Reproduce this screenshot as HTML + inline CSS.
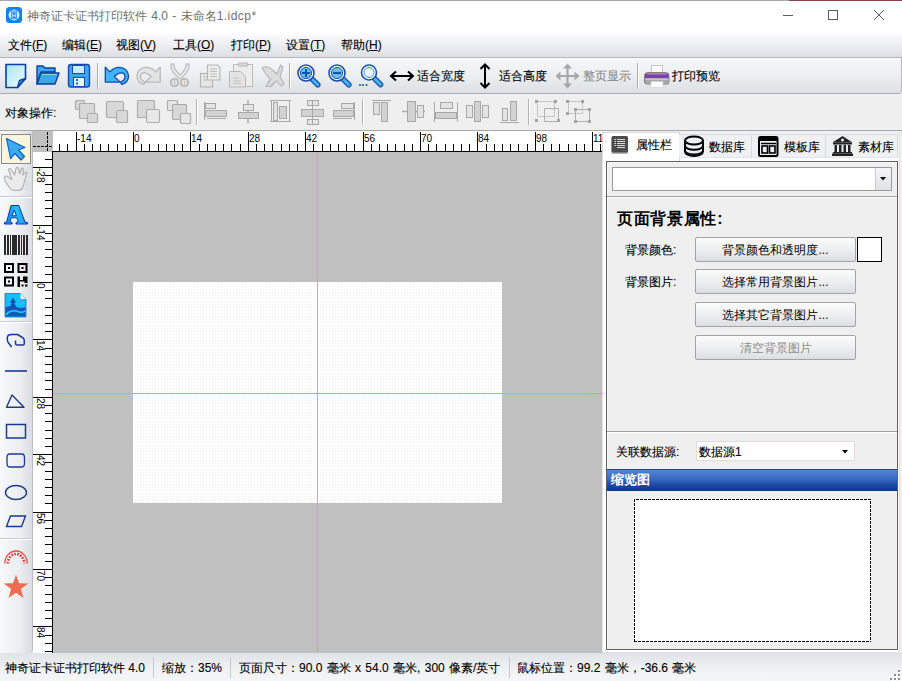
<!DOCTYPE html>
<html><head><meta charset="utf-8">
<style>
*{box-sizing:border-box}
html,body{margin:0;padding:0}
body{width:902px;height:681px;overflow:hidden;position:relative;background:#f0f0f0;font-family:"Liberation Sans",sans-serif;font-size:12px;color:#000}
.a{position:absolute}
.t{position:absolute;white-space:nowrap;line-height:14px;-webkit-text-stroke:0.12px currentColor}
svg{position:absolute;overflow:visible}
.btn{position:absolute;left:695px;width:161px;height:25px;border:1px solid #a3a3a3;border-radius:2px;background:linear-gradient(#fbfbfb,#eeeff0 50%,#dcdee0);text-align:center;line-height:24px;white-space:nowrap}
u{text-decoration:underline;text-underline-offset:1px}
</style></head><body>

<!-- top border -->
<div class="a" style="left:0;top:0;width:789px;height:1px;background:#a9a9a9"></div>
<div class="a" style="left:789px;top:0;width:113px;height:1px;background:#8b4050"></div>
<!-- title bar -->
<div class="a" style="left:0;top:1px;width:902px;height:33px;background:#fff"></div>
<svg style="left:6px;top:7px" width="16" height="16" viewBox="0 0 16 16">
<rect x="0" y="0" width="16" height="16" rx="3.5" fill="#1280f0"/>
<circle cx="8" cy="8" r="5.4" fill="#e6f4ff"/>
<rect x="5.3" y="4" width="5.4" height="7.8" fill="#9fd0ff" stroke="#2a86f0" stroke-width="0.9"/>
<circle cx="8" cy="6.6" r="1.3" fill="#1a7ef0"/>
<path d="M5.8 10.8Q8 7.6 10.2 10.8Z" fill="#1a7ef0"/>
</svg>
<div class="t" id="title" style="left:27px;top:9px;color:#707070;word-spacing:1px;-webkit-text-stroke:0">神奇证卡证书打印软件 4.0 - 未命名<span style="letter-spacing:0.45px">1.idcp*</span></div>
<svg style="left:0;top:0" width="902" height="34">
<line x1="783" y1="15.5" x2="793" y2="15.5" stroke="#5c5c5c" stroke-width="1"/>
<rect x="828.5" y="10.5" width="9" height="9" fill="none" stroke="#5c5c5c" stroke-width="1"/>
<path d="M874 10 L884 20 M884 10 L874 20" stroke="#5c5c5c" stroke-width="1"/>
</svg>

<!-- menubar -->
<div class="a" style="left:0;top:34px;width:902px;height:24px;background:linear-gradient(#fbfbfc,#e9ebee 60%,#dcdfe3);border-bottom:1px solid #b4b7bb"></div>
<div class="t" style="left:8px;top:38px">文件(<u>F</u>)</div>
<div class="t" style="left:62px;top:38px">编辑(<u>E</u>)</div>
<div class="t" style="left:116px;top:38px">视图(<u>V</u>)</div>
<div class="t" style="left:173px;top:38px">工具(<u>O</u>)</div>
<div class="t" style="left:231px;top:38px">打印(<u>P</u>)</div>
<div class="t" style="left:286px;top:38px">设置(<u>T</u>)</div>
<div class="t" style="left:341px;top:38px">帮助(<u>H</u>)</div>

<!-- toolbar 1 -->
<div class="a" style="left:0;top:58px;width:902px;height:36px;background:linear-gradient(#f6f7f8,#eceef0 50%,#dde0e4);border-bottom:1px solid #a9adb2;border-right:1px solid #b8bcc0;border-radius:0 0 4px 0"></div>
<div id="tb1">
<svg style="left:0;top:58px" width="902" height="36">
<defs>
<linearGradient id="gNew" x1="0" y1="0" x2="1" y2="1"><stop offset="0" stop-color="#a8e4f6"/><stop offset="1" stop-color="#f0fcff"/></linearGradient>
<linearGradient id="gBlue" x1="0" y1="0" x2="0" y2="1"><stop offset="0" stop-color="#5cc4f4"/><stop offset="1" stop-color="#1e8ae6"/></linearGradient>
</defs>
<!-- new -->
<path d="M6 6.5H25.5V20.5L17.5 29.5H6Z" fill="url(#gNew)" stroke="#0b3fa0" stroke-width="1.6" stroke-linejoin="round"/>
<path d="M17.5 29.5L19.5 22.5L25.5 20.5Z" fill="#3aa6ec" stroke="#0b3fa0" stroke-width="1.4" stroke-linejoin="round"/>
<!-- open -->
<path d="M37 26V8H43L45 10H55V14H41Z" fill="#3ca6ea" stroke="#0b3fa0" stroke-width="1.4" stroke-linejoin="round"/>
<path d="M37 26L41 15H59L55 26Z" fill="#3aa6ec" stroke="#0b3fa0" stroke-width="1.4" stroke-linejoin="round"/>
<path d="M42 16.5H57" stroke="#8ad6fa" stroke-width="1"/>
<!-- save -->
<rect x="68.5" y="6.5" width="21" height="22.5" rx="2.5" fill="#3aa6ec" stroke="#1a4aa8" stroke-width="1.4"/>
<rect x="72.5" y="7.5" width="12" height="8" fill="#c8eefc" stroke="#1a4aa8" stroke-width="1"/>
<rect x="73.5" y="19.5" width="11" height="9" fill="#e4f8ff" stroke="#1a4aa8" stroke-width="1"/>
<rect x="76" y="21" width="2" height="2" fill="#1a6ac8"/><rect x="76" y="24.5" width="2" height="2" fill="#1a6ac8"/>
<!-- sep -->
<rect x="97" y="5" width="1" height="26" fill="#a9adb2"/><rect x="98" y="5" width="1" height="26" fill="#fff"/>
<!-- undo -->
<path d="M105.3 9.1 L109.8 13.9 C112.5 10.8 116 9.3 119.5 9.3 C124.8 9.3 128.5 13.3 128.5 18 C128.5 22.2 125.8 25.3 121.7 26.4 L120.6 24 C123.3 23 125 21 125 18.8 C125 16.5 123.5 14.9 121.3 14.9 C118.8 14.9 116.5 16.5 114.3 18.4 L120.1 24.1 H105.3 Z" fill="#40b4f4" stroke="#1048b0" stroke-width="1.3" stroke-linejoin="round"/>
<!-- redo disabled -->
<path d="M 160.2 9.1 L 155.7 13.9 C 153.0 10.8 149.5 9.3 146.0 9.3 C 140.7 9.3 137.0 13.3 137.0 18 C 137.0 22.2 139.7 25.3 143.8 26.4 L 144.9 24 C 142.2 23 140.5 21 140.5 18.8 C 140.5 16.5 142.0 14.9 144.2 14.9 C 146.7 14.9 149.0 16.5 151.2 18.4 L 145.4 24.1 H 160.2 Z" fill="#e4e4e4" stroke="#b8b8b8" stroke-width="1.3" stroke-linejoin="round"/>
<!-- scissors disabled -->
<path d="M172.5 7.5C172.5 11 175 15 180 19M187.5 7.5C187.5 11 185 15 180 19" stroke="#b8b8b8" stroke-width="4.4" fill="none" stroke-linecap="round"/>
<path d="M172.5 7.5C172.5 11 175 15 180 19M187.5 7.5C187.5 11 185 15 180 19" stroke="#e6e6e6" stroke-width="2.2" fill="none" stroke-linecap="round"/>
<circle cx="174.5" cy="24.5" r="3.8" fill="#e2e2e2" stroke="#b2b2b2" stroke-width="1.6"/>
<circle cx="184.5" cy="24.5" r="3.8" fill="#e2e2e2" stroke="#b2b2b2" stroke-width="1.6"/>
<path d="M174.5 22.5V26.5M184.5 22.5V26.5" stroke="#c0c0c0" stroke-width="1"/>
<!-- copy disabled -->
<rect x="200.5" y="15.5" width="12" height="13.5" fill="#e6e6e6" stroke="#b4b4b4" stroke-width="1.1"/>
<path d="M207.5 7H217.5L220 9.5V22H207.5Z" fill="#ececec" stroke="#b4b4b4" stroke-width="1.1"/>
<path d="M210 11H217M210 13.5H217M210 16H217M210 18.5H217M203 19H207M203 22H207" stroke="#bcbcbc" stroke-width="1"/>
<!-- paste disabled -->
<rect x="233.5" y="6.5" width="19" height="22" fill="#ececec" stroke="#bcbcbc" stroke-width="1"/>
<rect x="238.5" y="5" width="9" height="3" fill="#dadada" stroke="#bcbcbc" stroke-width="1"/>
<path d="M229.5 13.5H240.5L245.5 18.5V29H229.5Z" fill="#e4e4e4" stroke="#b8b8b8" stroke-width="1"/>
<path d="M233 20H239M233 23H241M233 25.5H241" stroke="#c0c0c0" stroke-width="1.2"/>
<!-- delete disabled -->
<path d="M262 9.5C266 8 270 9 273 12.5L277 16L280.5 7L283 9.5L280 19L284 25.5L281 28L276.5 23L271 28.5H266L270 21L266 16C264.5 14 263 12 262 9.5Z" fill="#dcdcdc" stroke="#b4b4b4" stroke-width="1.1" stroke-linejoin="round"/>
<path d="M268 26L272 21M271 27L274 23" stroke="#c4c4c4" stroke-width="1"/>
<!-- sep -->
<rect x="289" y="5" width="1" height="26" fill="#a9adb2"/><rect x="290" y="5" width="1" height="26" fill="#fff"/>
<!-- zoom in -->
<path d="M312.5 21.5L317.8 26.8" stroke="#1a50b0" stroke-width="5.6" stroke-linecap="round"/>
<path d="M312.5 21.5L317.8 26.8" stroke="#46b4f0" stroke-width="3" stroke-linecap="round"/>
<circle cx="306" cy="15" r="8" fill="#fff" stroke="#1a50b0" stroke-width="1.6"/>
<circle cx="306" cy="15" r="5.6" fill="#6ac0f2" stroke="#1a50b0" stroke-width="1"/>
<path d="M306 11V19M302 15H310" stroke="#1a50b0" stroke-width="2"/>
<!-- zoom out -->
<path d="M343.5 21.5L348.8 26.8" stroke="#1a50b0" stroke-width="5.6" stroke-linecap="round"/>
<path d="M343.5 21.5L348.8 26.8" stroke="#46b4f0" stroke-width="3" stroke-linecap="round"/>
<circle cx="337" cy="15" r="8" fill="#fff" stroke="#1a50b0" stroke-width="1.6"/>
<circle cx="337" cy="15" r="5.6" fill="#6ac0f2" stroke="#1a50b0" stroke-width="1"/>
<path d="M333 15H341" stroke="#1a50b0" stroke-width="2.2"/>
<!-- zoom fit -->
<path d="M375 21L380.5 26.5" stroke="#1a50b0" stroke-width="5.6" stroke-linecap="round"/>
<path d="M375 21L380.5 26.5" stroke="#46b4f0" stroke-width="3" stroke-linecap="round"/>
<circle cx="369" cy="14.5" r="7.5" fill="#fff" stroke="#1a50b0" stroke-width="1.6"/>
<circle cx="369" cy="14.5" r="5" fill="#eaf6fd" stroke="#3a8ad8" stroke-width="1"/>
<path d="M360 26V28M363 26V28M366.5 26V28" stroke="#1a50b0" stroke-width="1.5"/>
<!-- width arrow -->
<path d="M392 18H412" stroke="#000" stroke-width="2"/>
<path d="M396 13.5L391 18L396 22.5M408 13.5L413 18L408 22.5" stroke="#000" stroke-width="2" fill="none" stroke-linejoin="miter"/>
<!-- height arrow -->
<path d="M485 7V29" stroke="#000" stroke-width="2"/>
<path d="M480.5 11L485 6.5L489.5 11M480.5 25L485 29.5L489.5 25" stroke="#000" stroke-width="2" fill="none"/>
<!-- 4way disabled -->
<path d="M567.5 9V27M559 18H576" stroke="#a8a8a8" stroke-width="2.2"/>
<path d="M567.5 5.5L572 10.5H563Z M567.5 30.5L572 25.5H563Z M555.5 18L560.5 13.5V22.5Z M579.5 18L574.5 13.5V22.5Z" fill="#a8a8a8"/>
<!-- sep -->
<rect x="637" y="5" width="1" height="26" fill="#a9adb2"/><rect x="638" y="5" width="1" height="26" fill="#fff"/>
<!-- printer -->
<rect x="651.5" y="7.5" width="11" height="8" fill="#fbfbfb" stroke="#c4c4c4" stroke-width="1"/>
<path d="M644.5 18Q644.5 14.5 648 14.5H665.5Q669 14.5 669 18V24Q669 26 667 26H646.5Q644.5 26 644.5 24Z" fill="#b4b4b4" stroke="#6a6a6a" stroke-width="0.8"/>
<path d="M645 15.5H668.5V20.5H645Z" fill="#7a3cb8"/>
<path d="M647 16H666.5" stroke="#b088e0" stroke-width="1"/>
<path d="M645 21H668.5V25.5H645Z" fill="#a8a8a8"/>
<path d="M645.5 21H668" stroke="#e0e0e0" stroke-width="1"/>
<rect x="651" y="23.5" width="12" height="6" fill="#fff" stroke="#d0d0d0" stroke-width="0.6"/>
</svg>
<div class="t" style="left:417px;top:69px">适合宽度</div>
<div class="t" style="left:499px;top:69px">适合高度</div>
<div class="t" style="left:583px;top:69px;color:#8a8a8a">整页显示</div>
<div class="t" style="left:672px;top:69px">打印预览</div>
</div>

<!-- toolbar 2 -->
<div class="a" style="left:0;top:94px;width:902px;height:37px;background:#efefef;border-bottom:1px solid #a8a8a8"></div>
<div class="t" style="left:5px;top:106px">对象操作:</div>
<div id="tb2">
<svg style="left:0;top:94px" width="902" height="36">
<g fill="#d8d8d8" stroke="#acacac" stroke-width="1.2">
<!-- layer icons -->
<rect x="75.5" y="6.5" width="9" height="9" rx="1"/>
<rect x="79.5" y="9.5" width="15" height="15" rx="1"/>
<rect x="87.5" y="19.5" width="10" height="9" rx="1"/>
<rect x="106.5" y="7.5" width="17" height="16" rx="1.5"/>
<rect x="116.5" y="16.5" width="11" height="12" rx="1"/>
<rect x="137.5" y="6.5" width="17" height="17" rx="1"/>
<rect x="146.5" y="15.5" width="13" height="13" rx="1.5" fill="#e8e8e8"/>
<rect x="167.5" y="6.5" width="10" height="10" rx="1" fill="#e6e6e6"/>
<rect x="172.5" y="10.5" width="14" height="15" rx="1"/>
<rect x="180.5" y="19.5" width="10" height="10" rx="1" fill="#e6e6e6"/>
</g>
<rect x="196" y="5" width="1" height="26" fill="#b4b4b4"/><rect x="197" y="5" width="1" height="26" fill="#fff"/>
<g fill="#d2d2d2" stroke="#a8a8a8" stroke-width="1">
<!-- align left -->
<path d="M204.5 8V26" stroke="#a8a8a8"/>
<rect x="205.5" y="9.5" width="10" height="5" fill="#e4e4e4"/>
<rect x="205.5" y="16.5" width="21" height="6"/>
<path d="M207 24.5H226" stroke="#a8a8a8"/>
<!-- align center -->
<path d="M248 6V29" stroke="#a8a8a8" stroke-width="1.5"/>
<rect x="243.5" y="10.5" width="10" height="6" fill="#e4e4e4"/>
<rect x="238.5" y="18.5" width="20" height="6"/>
<!-- same width -->
<path d="M271.5 6V28M289.5 6V28M270 6.5H291M270 27.5H291" stroke="#a8a8a8"/>
<rect x="273.5" y="8.5" width="4" height="18" fill="#e2e2e2"/>
<rect x="279.5" y="12.5" width="7" height="12"/>
<!-- center v -->
<rect x="307.5" y="6.5" width="11" height="5" fill="#e4e4e4"/>
<rect x="301.5" y="15.5" width="22" height="7"/>
<rect x="307.5" y="25.5" width="11" height="5" fill="#e4e4e4"/>
<path d="M312.5 6V31" stroke="#a8a8a8"/>
<!-- align right -->
<path d="M354.5 8V26" stroke="#a8a8a8"/>
<rect x="341.5" y="9.5" width="12" height="5" fill="#e4e4e4"/>
<rect x="333.5" y="16.5" width="20" height="6"/>
<path d="M333 24.5H352" stroke="#a8a8a8"/>
</g>
<rect x="362" y="5" width="1" height="26" fill="#b4b4b4"/><rect x="363" y="5" width="1" height="26" fill="#fff"/>
<g fill="#d2d2d2" stroke="#a8a8a8" stroke-width="1">
<!-- align top -->
<path d="M372 6.5H391" stroke="#a8a8a8"/>
<rect x="373.5" y="8.5" width="6" height="12" fill="#e0e0e0"/>
<rect x="381.5" y="8.5" width="6" height="19"/>
<!-- middle -->
<path d="M402 17.5H425" stroke="#a8a8a8" stroke-width="1.5"/>
<rect x="407.5" y="7.5" width="8" height="20"/>
<rect x="417.5" y="11.5" width="6" height="12" fill="#e4e4e4"/>
<!-- same height -->
<path d="M434.5 8V28M457.5 8V28" stroke="#a8a8a8"/>
<rect x="440.5" y="8.5" width="12" height="6" fill="#e4e4e4"/>
<rect x="435.5" y="18.5" width="21" height="6"/>
<!-- distribute -->
<rect x="466.5" y="11.5" width="6" height="12" fill="#e4e4e4"/>
<rect x="474.5" y="7.5" width="6" height="20"/>
<rect x="482.5" y="11.5" width="6" height="12" fill="#e4e4e4"/>
<!-- align bottom -->
<path d="M500 28.5H519" stroke="#a8a8a8"/>
<rect x="502.5" y="14.5" width="5" height="12" fill="#e4e4e4"/>
<rect x="510.5" y="7.5" width="6" height="19"/>
</g>
<rect x="528" y="5" width="1" height="26" fill="#b4b4b4"/><rect x="529" y="5" width="1" height="26" fill="#fff"/>
<g fill="none" stroke="#b0b0b0" stroke-width="1">
<path d="M537.5 7.5H554.5V22.5H537.5Z" stroke-dasharray="2 1"/>
<path d="M544.5 14.5H558.5V27.5H544.5Z"/>
<path d="M568.5 7.5H582.5V19.5H568.5Z" stroke-dasharray="2 1"/>
<path d="M575.5 15.5H589.5V27.5H575.5Z"/>
</g>
<g fill="#a4a4a4">
<rect x="535" y="6" width="3" height="3"/><rect x="554" y="6" width="3" height="3"/><rect x="535" y="25" width="3" height="3"/><rect x="557" y="25" width="3" height="3"/>
<rect x="566" y="6" width="3" height="3"/><rect x="581" y="6" width="3" height="3"/><rect x="566" y="18" width="3" height="3"/><rect x="574" y="14" width="3" height="3"/><rect x="588" y="14" width="3" height="3"/><rect x="574" y="26" width="3" height="3"/><rect x="588" y="26" width="3" height="3"/>
</g>
</svg>
</div>

<!-- left toolbox -->
<div class="a" style="left:0;top:131px;width:33px;height:522px;background:linear-gradient(90deg,#f7f8f9,#eceef1 60%,#dadde2);border-right:1px solid #b8bcc1;border-radius:0 0 4px 0"></div>
<div id="tools">
<div class="a" style="left:1px;top:134px;width:30px;height:30px;background:#fcf5dd;border:1px solid #8a8a8a"></div>
<svg style="left:0;top:131px" width="33" height="522">
<!-- arrow -->
<path d="M6.5 7.5L25 16.5L18.5 19L24.5 25.5L21 29L15 22.5L10.5 27.5Z" fill="#3caaf0" stroke="#1160c4" stroke-width="1.2" stroke-linejoin="round"/>
<!-- hand disabled -->
<path d="M4.6 46.2C5.5 44.5 7.5 45 9.5 47L12 48.5L8.6 39.2C8.3 37.5 10.4 37 11.2 38.5L14.5 44L16 37.5C16.5 36 18 36 18.5 37.5L19.6 43L21.3 38C21.8 36.8 23.3 37 23.3 38.3L22.8 44L25 41.5C26 40.5 27.2 41.2 26.7 42.5L23.5 54C22.8 57 21 59.4 18 59.4H14C12 59.4 10.5 58 9 56L5.5 50.5C4.5 49 4 47.5 4.6 46.2Z" fill="#ebebeb" stroke="#b2b2b2" stroke-width="1.2" stroke-linejoin="round"/>
<path d="M26.5 50.5V51.5M26.5 53.5V54.5M26.5 56.5V57.5" stroke="#b8bcc4" stroke-width="1"/>
<rect x="0" y="65" width="32" height="1" fill="#c8ccd0"/><rect x="0" y="66" width="32" height="1" fill="#fff"/>
<!-- A -->
<defs><linearGradient id="gA" x1="0" y1="0" x2="1" y2="0"><stop offset="0" stop-color="#1a74e8"/><stop offset="0.5" stop-color="#22c4fa"/><stop offset="1" stop-color="#1a90ee"/></linearGradient></defs>
<path d="M11 74.5H18.8L25 91L27.6 91.6V93H16V91.6L18.2 91L16.9 86.8H11.2L9.9 91L12.1 91.6V93H4.4V91.6L6.6 91Z M11.9 84.8L14.2 79L16.5 84.8Z" fill="url(#gA)" fill-rule="evenodd" stroke="#0838b0" stroke-width="1" stroke-linejoin="round"/>
<!-- barcode -->
<g fill="#2a2a2a">
<rect x="4" y="104" width="2" height="20"/><rect x="7" y="104" width="2" height="20"/><rect x="10" y="104" width="1" height="20"/><rect x="12" y="104" width="5" height="20"/><rect x="18" y="104" width="2" height="20"/><rect x="21" y="104" width="1" height="20"/><rect x="23" y="104" width="2" height="20"/><rect x="26" y="104" width="2" height="20"/>
</g>
<!-- QR -->
<g fill="#000">
<path d="M4 132H14V142H4Z M6 134V140H12V134Z" fill-rule="evenodd"/>
<rect x="8" y="136" width="2" height="2"/>
<path d="M17.5 132H27.5V142H17.5Z M19.5 134V140H25.5V134Z" fill-rule="evenodd"/>
<rect x="21.5" y="136" width="2" height="2"/>
<path d="M4 145.5H14V155.5H4Z M6 147.5V153.5H12V147.5Z" fill-rule="evenodd"/>
<rect x="8" y="149.5" width="2" height="2"/>
<path d="M17.5 145.5H20V149H23V145.5H27.5V152H24.5V150.5H20V156H17.5Z"/>
<rect x="21.5" y="153.5" width="2" height="2"/><rect x="25" y="153.5" width="2.5" height="2"/>
</g>
<!-- image -->
<path d="M5 162.5H20.5L26 168V186H5Z" fill="#12bff6" stroke="#2a70b0" stroke-width="0.8"/>
<path d="M20.5 162.5V168H26Z" fill="#e8f6ff"/>
<path d="M5.5 176C10 175 14 175 18 176.5C21 177.5 24 176.5 25.5 176V185.5H5.5Z" fill="#1458b8"/>
<path d="M6 184C8 180 14 179 18 180.5C20 181.5 23 181.5 25.5 180" stroke="#30c4ff" stroke-width="1.6" fill="none"/>
<path d="M13 166.5L10 172H12L9 177H17L14 172H16Z" fill="#1050b0"/>
<rect x="0" y="190" width="32" height="1" fill="#c8ccd0"/><rect x="0" y="191" width="32" height="1" fill="#fff"/>
<!-- curve -->
<path d="M11.7 216L8.2 211.5Q7.3 210 7.3 208V207Q7.3 203.5 11.5 203.5H17.5L20 205L23 206.8Q24.3 207.8 24.3 209.5V212.5Q24.3 214 22.8 214H17Q15.5 214 15.5 212.5V209.5" stroke="#1a3a94" stroke-width="1.5" fill="none" stroke-linejoin="round"/>
<!-- line -->
<path d="M5 240H27" stroke="#1a3c88" stroke-width="1.6"/>
<!-- triangle -->
<path d="M12 264L24 276.2H6.5Z" stroke="#1a3c88" stroke-width="1.4" fill="none" stroke-linejoin="round"/>
<!-- rect -->
<rect x="6.5" y="293.5" width="19" height="13.5" stroke="#1a3c88" stroke-width="1.5" fill="none"/>
<!-- rounded rect -->
<path d="M9.5 323H22C24 323 24.5 325 24.5 327V332C24.5 334 24 336 22 336H9.5C7.5 336 7 334 7 332V327C7 325 7.5 323 9.5 323Z" stroke="#1a3c88" stroke-width="1.3" fill="none"/>
<!-- ellipse -->
<ellipse cx="16" cy="361.5" rx="10.5" ry="7" stroke="#1a3c88" stroke-width="1.4" fill="none"/>
<!-- parallelogram -->
<path d="M10.5 385H25.5L21.5 395.5H6.5Z" stroke="#1a3c88" stroke-width="1.4" fill="none"/>
<rect x="0" y="407" width="32" height="1" fill="#c8ccd0"/><rect x="0" y="408" width="32" height="1" fill="#fff"/>
<!-- seal arc -->
<path d="M4.8 432.5A11.2 12.5 0 0 1 27.2 432.5" stroke="#ec4a40" stroke-width="1.3" fill="none"/>
<path d="M7.8 432.5A8.2 9.5 0 0 1 24.2 432.5" stroke="#e43a38" stroke-width="2.6" fill="none" stroke-dasharray="1.6 1.4"/>
<!-- star -->
<path d="M16.0 443.7L19.1 452.3L28.2 452.5L20.9 458.1L23.5 466.9L16.0 461.7L8.5 466.9L11.1 458.1L3.8 452.5L12.9 452.3Z" fill="#f06c50"/>
</svg>
</div>

<!-- ruler corner -->
<div class="a" style="left:33px;top:131px;width:20px;height:21px;background:#c0c0c0"></div>
<!-- top ruler -->
<div class="a" style="left:53px;top:131px;width:549px;height:21px;background:#fff"></div>
<!-- left ruler -->
<div class="a" style="left:33px;top:152px;width:20px;height:501px;background:#fff"></div>
<svg id="rulers" style="left:0;top:0" width="902" height="681" font-family="Liberation Sans" font-size="10"><rect x="33" y="132" width="20" height="19" fill="#c0c0c0"/><line x1="47.5" y1="132" x2="47.5" y2="151" stroke="#000" stroke-width="1" stroke-dasharray="3 1"/><line x1="33" y1="146.5" x2="52" y2="146.5" stroke="#000" stroke-width="1" stroke-dasharray="3 1"/><rect x="52" y="151" width="550" height="1" fill="#000"/><rect x="52" y="151" width="1" height="502" fill="#000"/><text x="77" y="142">-14</text><text x="134" y="142">0</text><text x="191" y="142">14</text><text x="249" y="142">28</text><text x="306" y="142">42</text><text x="364" y="142">56</text><text x="421" y="142">70</text><text x="478" y="142">84</text><text x="536" y="142">98</text><text x="593" y="142">112</text><text transform="translate(37 168) rotate(90)">-28</text><text transform="translate(37 226) rotate(90)">-14</text><text transform="translate(37 283) rotate(90)">0</text><text transform="translate(37 340) rotate(90)">14</text><text transform="translate(37 398) rotate(90)">28</text><text transform="translate(37 455) rotate(90)">42</text><text transform="translate(37 513) rotate(90)">56</text><text transform="translate(37 570) rotate(90)">70</text><text transform="translate(37 627) rotate(90)">84</text><path d="M59.5 144V151M67.5 144V151M76.5 132V151M84.5 144V151M92.5 144V151M100.5 144V151M108.5 144V151M117.5 144V151M125.5 144V151M133.5 132V151M141.5 144V151M149.5 144V151M158.5 144V151M166.5 144V151M174.5 144V151M182.5 144V151M190.5 132V151M199.5 144V151M207.5 144V151M215.5 144V151M223.5 144V151M231.5 144V151M240.5 144V151M248.5 132V151M256.5 144V151M264.5 144V151M272.5 144V151M281.5 144V151M289.5 144V151M297.5 144V151M305.5 132V151M313.5 144V151M322.5 144V151M330.5 144V151M338.5 144V151M346.5 144V151M354.5 144V151M363.5 132V151M371.5 144V151M379.5 144V151M387.5 144V151M395.5 144V151M404.5 144V151M412.5 144V151M420.5 132V151M428.5 144V151M436.5 144V151M445.5 144V151M453.5 144V151M461.5 144V151M469.5 144V151M477.5 132V151M486.5 144V151M494.5 144V151M502.5 144V151M510.5 144V151M518.5 144V151M527.5 144V151M535.5 132V151M543.5 144V151M551.5 144V151M559.5 144V151M568.5 144V151M576.5 144V151M584.5 144V151M592.5 132V151M600.5 144V151M45 159.5H52M33 167.5H52M45 175.5H52M45 184.5H52M45 192.5H52M45 200.5H52M45 208.5H52M45 216.5H52M33 225.5H52M45 233.5H52M45 241.5H52M45 249.5H52M45 257.5H52M45 266.5H52M45 274.5H52M33 282.5H52M45 290.5H52M45 298.5H52M45 307.5H52M45 315.5H52M45 323.5H52M45 331.5H52M33 339.5H52M45 348.5H52M45 356.5H52M45 364.5H52M45 372.5H52M45 380.5H52M45 389.5H52M33 397.5H52M45 405.5H52M45 413.5H52M45 421.5H52M45 430.5H52M45 438.5H52M45 446.5H52M33 454.5H52M45 462.5H52M45 471.5H52M45 479.5H52M45 487.5H52M45 495.5H52M45 503.5H52M33 512.5H52M45 520.5H52M45 528.5H52M45 536.5H52M45 544.5H52M45 553.5H52M45 561.5H52M33 569.5H52M45 577.5H52M45 585.5H52M45 594.5H52M45 602.5H52M45 610.5H52M45 618.5H52M33 626.5H52M45 635.5H52M45 643.5H52M45 651.5H52" stroke="#000" stroke-width="1"/></svg>
<!-- canvas -->
<div class="a" style="left:53px;top:152px;width:549px;height:501px;background:#c0c0c0"></div>
<svg style="left:133px;top:282px" width="369" height="221">
<defs><pattern id="dots" x="1" y="1" width="3" height="3" patternUnits="userSpaceOnUse"><rect width="1" height="1" fill="#ebeef1"/></pattern></defs>
<rect x="0" y="0" width="369" height="221" fill="#fff"/>
<rect x="0" y="0" width="369" height="221" fill="url(#dots)"/>
</svg>
<div class="a" style="left:317px;top:152px;width:1px;height:501px;background:#00ffff"></div>
<div class="a" style="left:53px;top:393px;width:549px;height:1px;background:#00ffff"></div>

<!-- right panel -->
<div id="rp">
<div class="a" style="left:602px;top:131px;width:300px;height:522px;background:#fff"></div>
<div class="a" style="left:602px;top:131px;width:1px;height:522px;background:#e6e6e6"></div>
<div class="a" style="left:602px;top:131px;width:300px;height:27px;background:#eef0f1"></div>
<div class="a" style="left:602px;top:132px;width:78px;height:30px;background:#fff;border:1px solid #d6dadd;border-bottom:none"></div>
<!-- inactive tabs -->
<div class="a" style="left:679px;top:134px;width:219px;height:24px;background:#eef0f2;border-top:1px solid #d9dde1;border-right:1px solid #d9dde1;border-bottom:1px solid #e2e5e8"></div>
<div class="a" style="left:751px;top:135px;width:1px;height:23px;background:#d5d9dd"></div>
<div class="a" style="left:825px;top:135px;width:1px;height:23px;background:#d5d9dd"></div>
<svg style="left:600px;top:131px" width="302" height="30">
<!-- property icon -->
<rect x="11.5" y="6" width="16.5" height="17" rx="1.5" fill="#b4b4b4"/>
<rect x="11.5" y="5" width="16.5" height="16.5" rx="1.5" fill="#4c4c4c"/>
<path d="M17 8.5H25M17 10.5H25M17 12.5H25M17 14.5H25M17 16.5H25" stroke="#d8d8d8" stroke-width="1"/>
<path d="M14.5 8.5H16M14.5 10.5H16M14.5 12.5H16M14.5 14.5H16" stroke="#e0e0e0" stroke-width="1"/>
<!-- db icon -->
<g fill="none" stroke="#000" stroke-width="2">
<ellipse cx="94" cy="9.5" rx="9" ry="4"/>
<path d="M85 9.5V20.5C85 23 89 25 94 25C99 25 103 23 103 20.5V9.5"/>
<path d="M85 14.5C85 17 89 18.8 94 18.8C99 18.8 103 17 103 14.5"/>
<path d="M85 19C85 21.5 89 23.3 94 23.3C99 23.3 103 21.5 103 19" stroke-width="1.5"/>
</g>
<!-- template icon -->
<rect x="159" y="6" width="18.5" height="19" rx="1.5" fill="none" stroke="#000" stroke-width="2"/>
<rect x="159" y="6" width="18.5" height="4" fill="#000"/>
<path d="M161 12.5H176" stroke="#000" stroke-width="1.5"/>
<rect x="162" y="15" width="5.5" height="7" fill="none" stroke="#000" stroke-width="1.6"/>
<rect x="169.5" y="15" width="5.5" height="7" fill="none" stroke="#000" stroke-width="1.6"/>
<!-- bank icon -->
<path d="M242.5 5L252.5 11.5H232.5Z" fill="#222"/>
<circle cx="242.5" cy="9" r="1.5" fill="#eee"/>
<rect x="233" y="11.5" width="19" height="2" fill="#222"/>
<rect x="234.5" y="14" width="2.5" height="7" fill="#222"/><rect x="239" y="14" width="2.5" height="7" fill="#222"/><rect x="243.5" y="14" width="2.5" height="7" fill="#222"/><rect x="248" y="14" width="2.5" height="7" fill="#222"/>
<rect x="233" y="21" width="19" height="1.5" fill="#222"/>
<rect x="232" y="22.5" width="21" height="2.5" fill="#222"/>
</svg>
<div class="t" style="left:636px;top:138px">属性栏</div>
<div class="t" style="left:709px;top:140px">数据库</div>
<div class="t" style="left:784px;top:140px">模板库</div>
<div class="t" style="left:858px;top:140px">素材库</div>
<!-- content panel -->
<div class="a" style="left:606px;top:161px;width:292px;height:489px;background:#efefef;border:1px solid #606060;box-shadow:1px 1px 0 #fff, inset 1px 1px 0 #f8f8f8"></div>
<div class="a" style="left:899px;top:131px;width:1px;height:522px;background:#ecdcdc"></div>
<div class="a" style="left:900px;top:159px;width:2px;height:494px;background:#eff0f0"></div>
<!-- combo -->
<div class="a" style="left:612px;top:167px;width:280px;height:24px;background:#fff;border:1px solid #9a9a9a"></div>
<div class="a" style="left:875px;top:168px;width:16px;height:22px;background:linear-gradient(#f4f5f6,#dfe2e5);border-left:1px solid #c8cbce"></div>
<svg style="left:880px;top:177px" width="8" height="4"><path d="M0 0H6L3 3.5Z" fill="#000"/></svg>
<div class="a" style="left:607px;top:196px;width:290px;height:1px;background:#a0a0a0"></div>
<div class="a" style="left:607px;top:197px;width:290px;height:1px;background:#fff"></div>
<div class="t" style="left:617px;top:210px;font-size:16px;line-height:18px;font-weight:bold;letter-spacing:0.7px;-webkit-text-stroke:0">页面背景属性:</div>
<div class="t" style="left:625px;top:243px">背景颜色:</div>
<div class="t" style="left:625px;top:275px">背景图片:</div>
<div class="btn" style="top:237px">背景颜色和透明度...</div>
<div class="btn" style="top:269px">选择常用背景图片...</div>
<div class="btn" style="top:302px">选择其它背景图片...</div>
<div class="btn" style="top:335px;color:#8c8c8c">清空背景图片</div>
<div class="a" style="left:857px;top:237px;width:25px;height:25px;background:#fff;border:1px solid #000"></div>
<div class="a" style="left:607px;top:431px;width:290px;height:1px;background:#a0a0a0"></div>
<div class="a" style="left:607px;top:432px;width:290px;height:1px;background:#fff"></div>
<div class="t" style="left:616px;top:445px">关联数据源:</div>
<div class="a" style="left:696px;top:441px;width:159px;height:20px;background:#fff;border:1px solid #e4dcdc"></div>
<div class="t" style="left:699px;top:445px">数据源1</div>
<svg style="left:842px;top:450px" width="8" height="4"><path d="M0 0H6L3 3.5Z" fill="#000"/></svg>
<div class="a" style="left:607px;top:469px;width:290px;height:22px;background:linear-gradient(#5684d4,#3767c0 45%,#1c4aa6 70%,#0b3795);border-top:1px solid #1a46a0"></div>
<div class="t" style="left:611px;top:472px;color:#fff;font-weight:bold;font-size:13px;line-height:15px;-webkit-text-stroke:0">缩览图</div>
<svg style="left:634px;top:499px" width="237" height="143">
<rect x="0" y="0" width="237" height="143" fill="#fff"/>
<path d="M2 0.5H237M0.5 0V143M236.5 2V143M0 142.5H237" stroke="#000" stroke-width="1" stroke-dasharray="3 1"/>
</svg>
<div class="a" style="left:602px;top:652px;width:298px;height:1px;background:#ecdcdc"></div>
</div>

<!-- status bar -->
<div class="a" style="left:0;top:653px;width:902px;height:28px;background:linear-gradient(#dfe3e7,#eef0f2 50%,#f5f6f7)"></div>
<div class="t" id="st1" style="left:5px;top:661px">神奇证卡证书打印软件 4.0</div>
<div class="a" style="left:153px;top:657px;width:1px;height:21px;background:#c5c8cc"></div>
<div class="t" id="st2" style="left:162px;top:661px">缩放：35%</div>
<div class="a" style="left:230px;top:657px;width:1px;height:21px;background:#c5c8cc"></div>
<div class="t" id="st3" style="left:239px;top:661px;word-spacing:1px">页面尺寸：90.0 毫米 x 54.0 毫米, 300 像素/英寸</div>
<div class="a" style="left:509px;top:657px;width:1px;height:21px;background:#c5c8cc"></div>
<div class="t" id="st4" style="left:517px;top:661px;word-spacing:1px">鼠标位置：99.2 毫米，-36.6 毫米</div>

<svg style="left:0;top:0" width="902" height="681">
<g fill="#fff"><rect x="899" y="671" width="2" height="2"/><rect x="895" y="675" width="2" height="2"/><rect x="899" y="675" width="2" height="2"/><rect x="891" y="679" width="2" height="2"/><rect x="895" y="679" width="2" height="2"/><rect x="899" y="679" width="2" height="2"/></g>
<g fill="#8e8e8e"><rect x="898" y="670" width="2" height="2"/><rect x="894" y="674" width="2" height="2"/><rect x="898" y="674" width="2" height="2"/><rect x="890" y="678" width="2" height="2"/><rect x="894" y="678" width="2" height="2"/><rect x="898" y="678" width="2" height="2"/></g>
</svg>
</body></html>
